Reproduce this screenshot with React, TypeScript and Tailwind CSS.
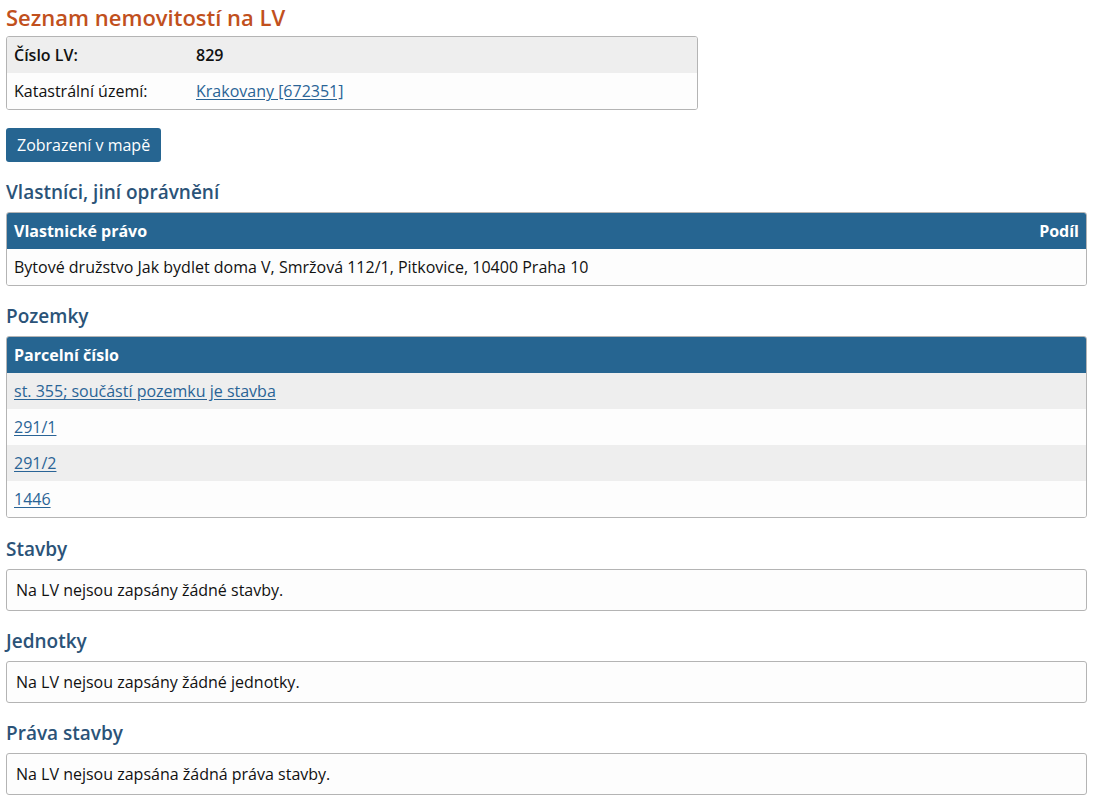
import React from "react";

type Parcel = { label: string };

const parcels: Parcel[] = [
  { label: "st. 355; součástí pozemku je stavba" },
  { label: "291/1" },
  { label: "291/2" },
  { label: "1446" },
];

const linkClass = "text-[#2a6496] underline underline-offset-2";

const SectionTitle = ({
  children,
  className = "mt-[17px]",
}: {
  children: React.ReactNode;
  className?: string;
}) => (
  <h2
    className={
      className +
      " mb-[7px] text-[19px] leading-[26px] font-semibold text-[#2b5378]"
    }
  >
    {children}
  </h2>
);

const EmptyBox = ({ text }: { text: string }) => (
  <div className="h-[42px] flex items-center rounded-[3px] border border-[#b4b4b4] bg-[#fdfdfd] px-[9px]">
    {text}
  </div>
);

const App = () => {
  return (
    <div
      className="bg-white pl-[6px] pr-[17px] pt-[2px] pb-4 text-[16px] text-[#111] min-h-[800px]"
      style={{ fontFamily: '"Open Sans", "Noto Sans", sans-serif' }}
    >
      <h1 className="text-[22px] leading-[30px] font-semibold text-[#c1501d]">
        Seznam nemovitostí na LV
      </h1>

      {/* základní údaje o listu vlastnictví */}
      <div className="mt-[4px] w-[692px] overflow-hidden rounded-[3px] border border-[#b4b4b4]">
        <div className="flex h-[36px] items-center bg-[#eeeeee] px-[7px] font-semibold">
          <div className="w-[182px]">Číslo LV:</div>
          <div>829</div>
        </div>
        <div className="flex h-[36px] items-center bg-[#fdfdfd] px-[7px]">
          <div className="w-[182px]">Katastrální území:</div>
          <a href="#" className={linkClass}>
            Krakovany [672351]
          </a>
        </div>
      </div>

      <button className="mt-[18px] h-[34px] rounded-[3px] bg-[#266591] px-[11px] text-white">
        Zobrazení v mapě
      </button>

      <SectionTitle>Vlastníci, jiní oprávnění</SectionTitle>
      <div className="overflow-hidden rounded-[3px] border border-[#b4b4b4]">
        <div className="flex h-[36px] items-center justify-between bg-[#266591] px-[7px] font-bold text-white">
          <span>Vlastnické právo</span>
          <span>Podíl</span>
        </div>
        <div className="flex h-[36px] items-center bg-[#fdfdfd] px-[7px]">
          Bytové družstvo Jak bydlet doma V, Smržová 112/1, Pitkovice, 10400 Praha 10
        </div>
      </div>

      <SectionTitle>Pozemky</SectionTitle>
      <div className="overflow-hidden rounded-[3px] border border-[#b4b4b4]">
        <div className="flex h-[36px] items-center bg-[#266591] px-[7px] font-bold text-white">
          Parcelní číslo
        </div>
        {parcels.map((p, i) => (
          <div
            key={p.label}
            className={
              "flex h-[36px] items-center px-[7px] " +
              (i % 2 === 0 ? "bg-[#eeeeee]" : "bg-[#fdfdfd]")
            }
          >
            <a href="#" className={linkClass}>
              {p.label}
            </a>
          </div>
        ))}
      </div>

      <SectionTitle className="mt-[18px]">Stavby</SectionTitle>
      <EmptyBox text="Na LV nejsou zapsány žádné stavby." />

      <SectionTitle>Jednotky</SectionTitle>
      <EmptyBox text="Na LV nejsou zapsány žádné jednotky." />

      <SectionTitle>Práva stavby</SectionTitle>
      <EmptyBox text="Na LV nejsou zapsána žádná práva stavby." />
    </div>
  );
};

export default App;
